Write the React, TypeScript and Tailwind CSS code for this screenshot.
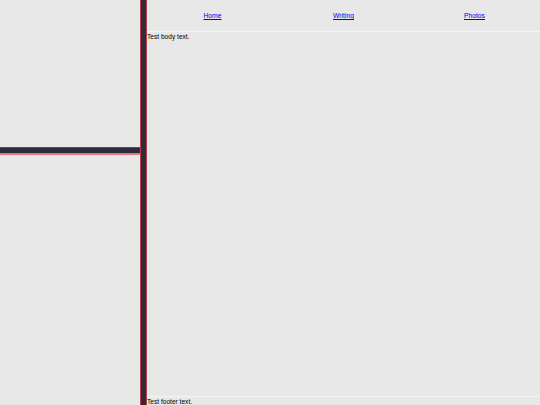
export default function App() {
    const links = ['Home', 'Writing', 'Photos'];
    return (
        <div
            className="flex h-[405px] w-[540px] overflow-hidden bg-[#e8e8e8] text-black"
            style={{ fontFamily: '"Liberation Sans", Arial, sans-serif' }}
        >
            {/* Left column */}
            <div className="flex w-[140px] shrink-0 flex-col">
                <div className="h-[147px]" />
                <div className="h-[8px] border-t border-b-2 border-t-[#8e3a48] border-b-[#e07880] bg-[#2e2b3f]" />
                <div className="flex-1" />
            </div>

            {/* Divider */}
            <div className="w-[7px] shrink-0 border-x border-x-[#b54048] bg-[#2e2b3f]" />

            {/* Main */}
            <div className="flex min-w-0 flex-1 flex-col">
                <nav className="grid h-[32px] shrink-0 grid-cols-3 items-center border-b border-b-[#f4f4f4] pt-[2px]">
                    {links.map((l) => (
                        <a key={l} href="#" className="text-center text-[6.75px] leading-none text-[#0000ee] underline">
                            {l}
                        </a>
                    ))}
                </nav>
                <div className="flex-1 pt-[1px] text-[6.6px] leading-[8px]">Test body text.</div>
                <footer className="h-[9px] shrink-0 border-t border-t-[#f4f4f4] pt-[1px] text-[6.6px] leading-[8px]">
                    Test footer text.
                </footer>
            </div>
        </div>
    );
}
